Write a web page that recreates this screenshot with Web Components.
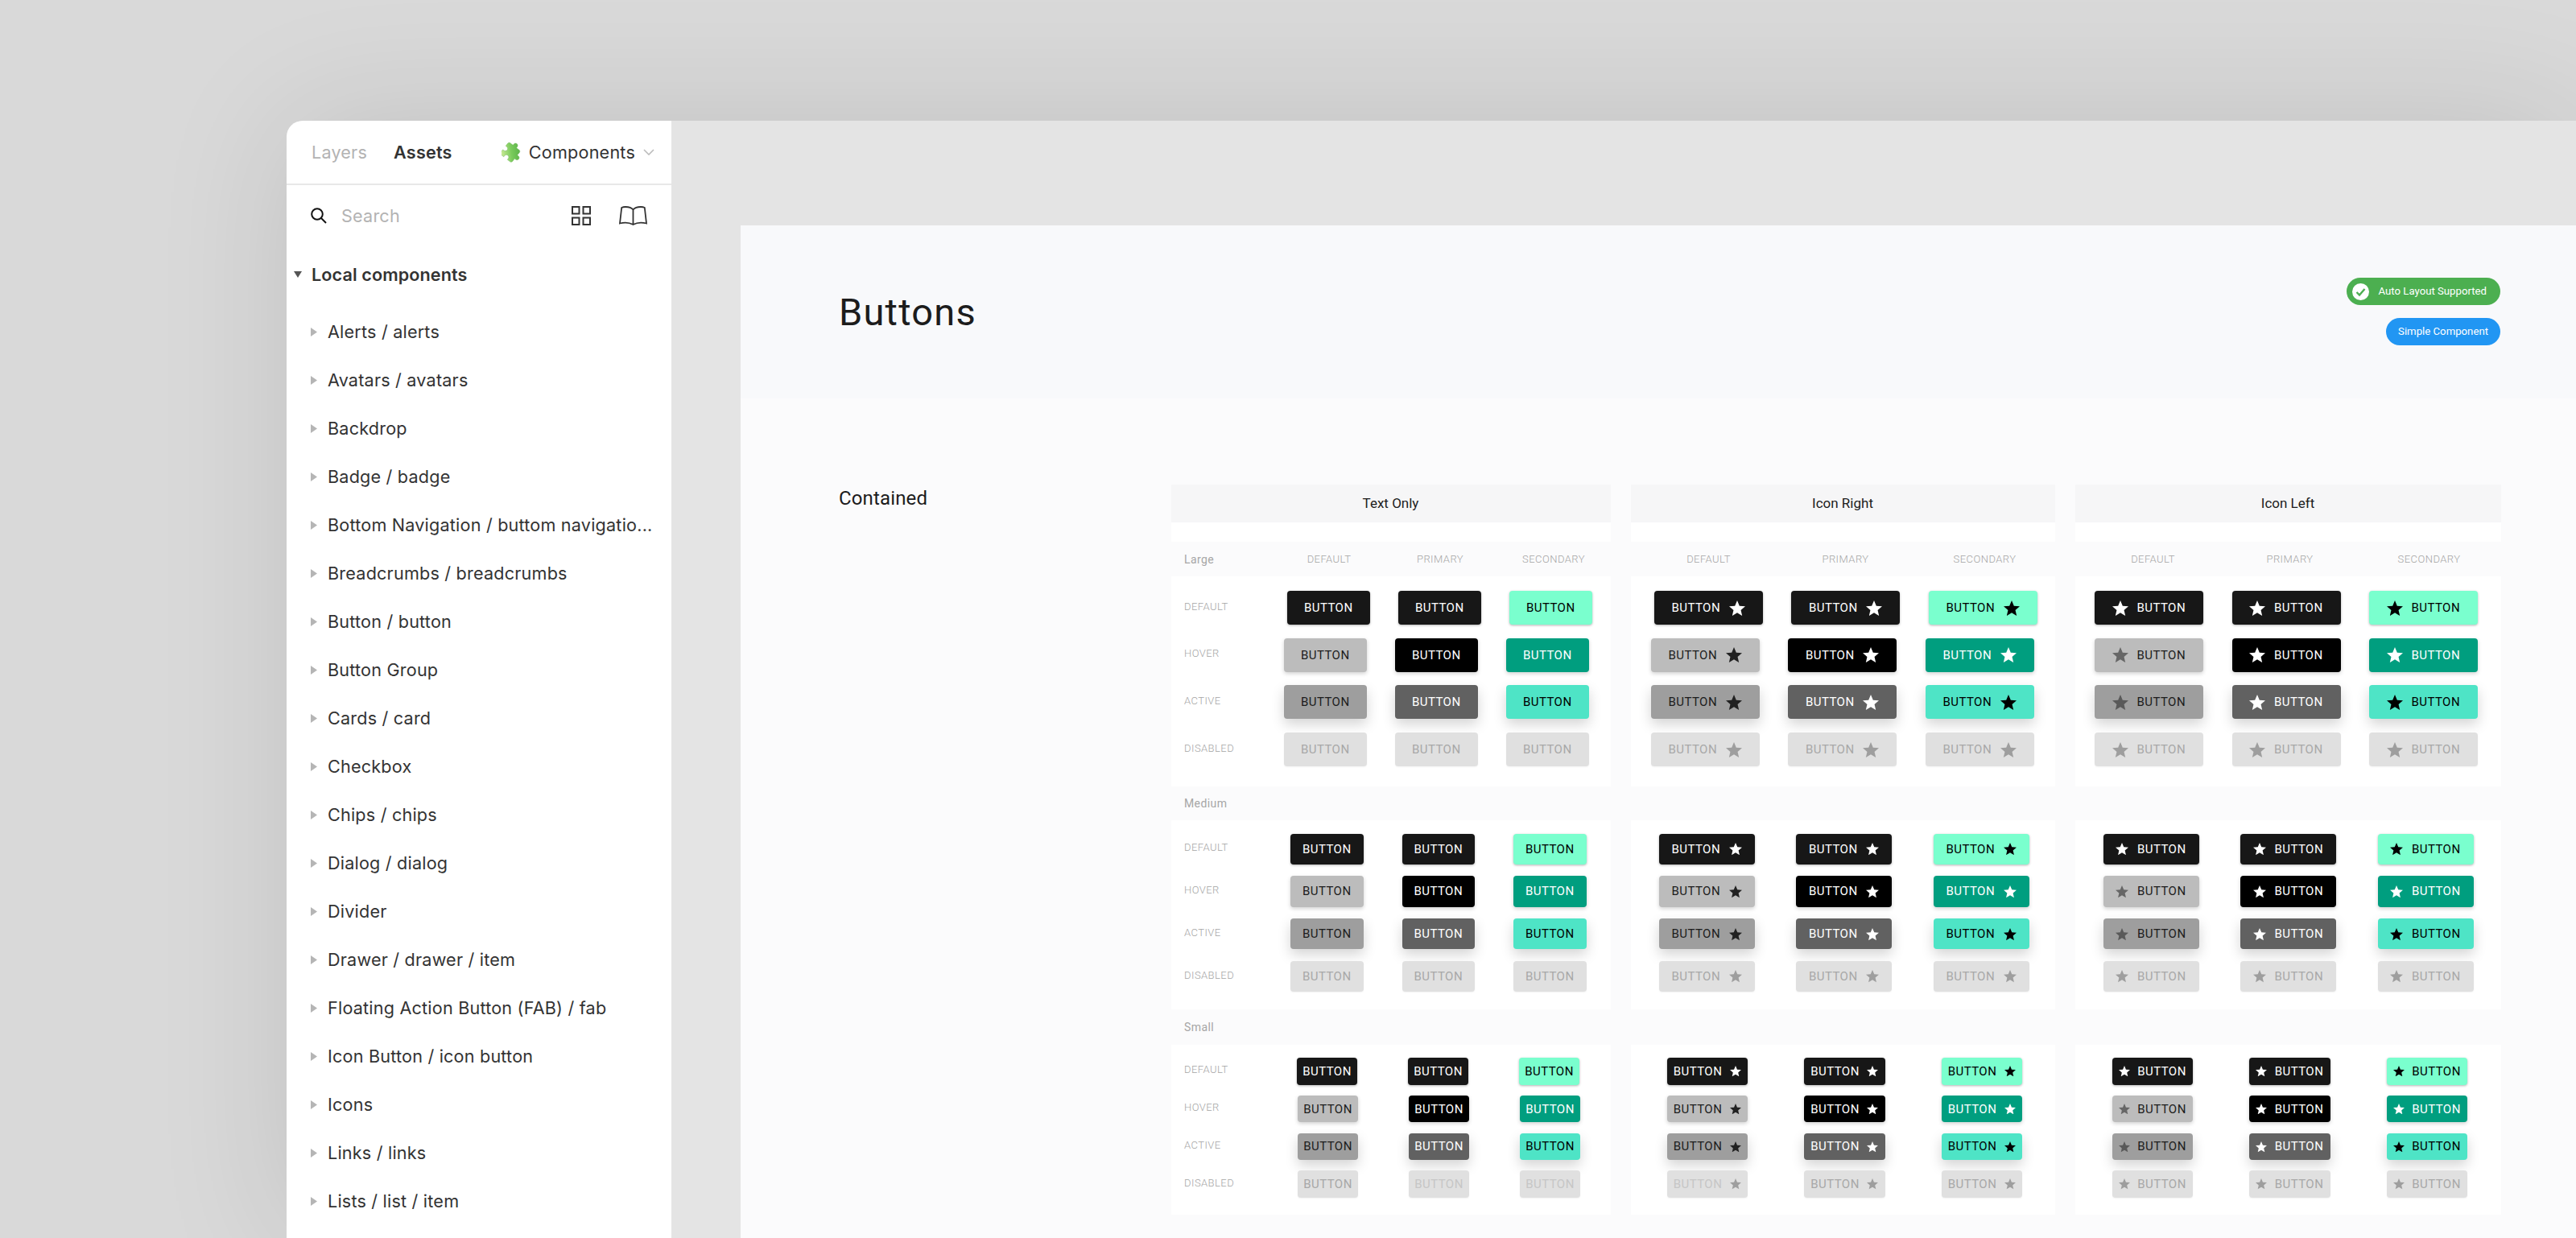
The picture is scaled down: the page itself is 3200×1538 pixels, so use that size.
<!DOCTYPE html>
<html>
<head>
<meta charset="utf-8">
<title>Buttons</title>
<style>
  html, body { margin: 0; height: 1538px; overflow: hidden; background: #d9d9d9; }
  body { font-family: "Inter", "Liberation Sans", sans-serif; }
</style>
</head>
<body>
<figma-window>
  <assets-panel slot="side"></assets-panel>
  <design-canvas slot="main">
    <buttons-board></buttons-board>
  </design-canvas>
</figma-window>

<script>
const STAR = 'M12 17.27L18.18 21l-1.64-7.03L22 9.24l-7.19-.61L12 2 9.19 8.63 2 9.24l5.46 4.73L5.82 21z';

const THEME = {
    default: {
        default: ['#171717', '#fff', '#fff'],
        hover: ['#bcbcbc', '#1c1c1c', '#212121'],
        active: ['#9e9e9e', '#1c1c1c', '#212121'],
        disabled: ['#e0e0e0', '#a8a8a8', '#9e9e9e']
    },
    primary: {
        default: ['#171717', '#fff', '#fff'],
        hover: ['#000', '#fff', '#fff'],
        active: ['#616161', '#fff', '#fff'],
        disabled: ['#e0e0e0', '#a8a8a8', '#9e9e9e']
    },
    secondary: {
        default: ['#7affce', '#000', '#000'],
        hover: ['#009e7f', '#fff', '#fff'],
        active: ['#4ee4c6', '#000', '#000'],
        disabled: ['#e0e0e0', '#a8a8a8', '#9e9e9e']
    }
};

const SHADOW = {
    default: '0 1px 3px rgba(0,0,0,.3)',
    hover: '0 2px 5px rgba(0,0,0,.18)',
    active: '0 7px 16px rgba(0,0,0,.17)',
    disabled: '0 1px 2px rgba(0,0,0,.05)'
};

class FigmaWindow extends HTMLElement {
    constructor() {
        super();
        this.shadowDOM = this.attachShadow({mode: 'open'});
    }
    connectedCallback() {
        this.shadowDOM.innerHTML = `
            <style>
            :host {
                display: flex;
                margin: 150px 0 0 356px;
                height: 1388px;
                border-top-left-radius: 20px;
                box-shadow: 0 0 170px rgba(0,0,0,.11);
                overflow: visible;
            }
            </style>
            <slot name="side"></slot>
            <slot name="main"></slot>
        `;
    }
}

class TreeRow extends HTMLElement {
    constructor() {
        super();
        this.shadowDOM = this.attachShadow({mode: 'open'});
    }
    connectedCallback() {
        this.shadowDOM.innerHTML = `
            <style>
            :host {
                display: flex;
                align-items: center;
                height: 60px;
                padding-left: 30px;
                font-size: 21.6px;
                letter-spacing: .2px;
                color: #333;
                white-space: nowrap;
            }
            svg { width: 8px; height: 11px; margin-right: 13px; flex: none; }
            </style>
            <svg viewBox="0 0 8 11"><path d="M0 0l8 5.5L0 11z" fill="#b5b5b5"/></svg>
            <slot></slot>
        `;
    }
}

class AssetsPanel extends HTMLElement {
    constructor() {
        super();
        this.shadowDOM = this.attachShadow({mode: 'open'});
    }
    connectedCallback() {
        const items = ['Alerts / alerts', 'Avatars / avatars', 'Backdrop', 'Badge / badge',
            'Bottom Navigation / buttom navigatio...', 'Breadcrumbs / breadcrumbs', 'Button / button',
            'Button Group', 'Cards / card', 'Checkbox', 'Chips / chips', 'Dialog / dialog', 'Divider',
            'Drawer / drawer / item', 'Floating Action Button (FAB) / fab', 'Icon Button / icon button',
            'Icons', 'Links / links', 'Lists / list / item'];
        this.shadowDOM.innerHTML = `
            <style>
            :host {
                display: block;
                width: 478px;
                height: 1388px;
                background: #fff;
                border-top-left-radius: 20px;
                overflow: hidden;
                font-family: "Inter", "Liberation Sans", sans-serif;
                color: #333;
            }
            .tabs {
                display: flex;
                align-items: center;
                height: 78px;
                padding: 0 21px 0 31px;
                border-bottom: 2px solid #e8e8e8;
                font-size: 21.6px;
                letter-spacing: .2px;
            }
            .layers { color: #b3b3b3; margin-right: 33px; }
            .assets { font-weight: 600; }
            .kit { display: flex; align-items: center; margin-left: auto; }
            .kit .puzzle { width: 26px; height: 26px; margin-right: 8px; }
            .kit .chev { width: 14px; height: 8px; margin-left: 10px; }
            .search {
                display: flex;
                align-items: center;
                height: 76px;
                padding: 0 30px 0 30px;
            }
            .search .text { font-size: 21.6px; letter-spacing: .2px; color: #b3b3b3; margin-left: 18px; }
            .search .grid { margin-left: auto; margin-right: 35px; }
            .local {
                display: flex;
                align-items: center;
                height: 70px;
                padding: 0 0 8px 9px;
                box-sizing: content-box;
                margin-bottom: -2px;
                font-size: 21.6px;
                font-weight: 600;
                letter-spacing: .1px;
            }
            .local svg { width: 10px; height: 8px; margin-right: 12px; }
            </style>
            <div class="tabs">
                <span class="layers">Layers</span>
                <span class="assets">Assets</span>
                <span class="kit">
                    <svg class="puzzle" viewBox="0 0 24 24">
                        <defs><linearGradient id="pz" x1="1" y1="0" x2="0" y2="1">
                            <stop offset="0" stop-color="#4aa63f"/>
                            <stop offset=".55" stop-color="#7acb5c"/>
                            <stop offset="1" stop-color="#d6ee9f"/>
                        </linearGradient></defs>
                        <path transform="rotate(38 12 12)" fill="url(#pz)" stroke="#6db356" stroke-width=".4" d="M20.5 11H19V7c0-1.1-.9-2-2-2h-4V3.5C13 2.12 11.88 1 10.5 1S8 2.12 8 3.5V5H4c-1.1 0-1.99.9-1.99 2v3.8H3.5c1.49 0 2.7 1.21 2.7 2.7s-1.21 2.7-2.7 2.7H2V20c0 1.1.9 2 2 2h3.8v-1.5c0-1.49 1.21-2.7 2.7-2.7 1.49 0 2.7 1.21 2.7 2.7V22H17c1.1 0 2-.9 2-2v-4h1.5c1.38 0 2.5-1.12 2.5-2.5S21.88 11 20.5 11z"/>
                    </svg>
                    <span>Components</span>
                    <svg class="chev" viewBox="0 0 14 8"><path d="M1 1l6 6 6-6" fill="none" stroke="#bbb" stroke-width="1.6"/></svg>
                </span>
            </div>
            <div class="search">
                <svg width="20" height="20" viewBox="0 0 20 20"><circle cx="8" cy="8" r="6.8" fill="none" stroke="#111" stroke-width="2"/><path d="M13 13l6 6" stroke="#111" stroke-width="2" fill="none"/></svg>
                <span class="text">Search</span>
                <svg class="grid" width="24" height="24" viewBox="0 0 24 24" fill="none" stroke="#333" stroke-width="2">
                    <rect x="1" y="1" width="8.5" height="8.5"/><rect x="14.5" y="1" width="8.5" height="8.5"/>
                    <rect x="1" y="14.5" width="8.5" height="8.5"/><rect x="14.5" y="14.5" width="8.5" height="8.5"/>
                </svg>
                <svg width="35" height="24" viewBox="0 0 35 24" fill="none" stroke="#333" stroke-width="1.8">
                    <path d="M17.5 4.5C15.5 2 12 1 8 1 6 1 4.5 1.3 3.2 2L1 21.5c5-1.3 11.5-1.3 16.5 1.5 5-2.8 11.5-2.8 16.5-1.5L31.8 2C30.500 1.300 29 1 27 1c-4 0-7.500 1-9.500 3.500zM17.500 4.500V23"/>
                </svg>
            </div>
            <div class="local">
                <svg viewBox="0 0 10 8"><path d="M0 0h10L5 8z" fill="#555"/></svg>
                <span>Local components</span>
            </div>
            <div class="list">${items.map(t => `<tree-row>${t}</tree-row>`).join('')}</div>
        `;
    }
}

class DesignCanvas extends HTMLElement {
    constructor() {
        super();
        this.shadowDOM = this.attachShadow({mode: 'open'});
    }
    connectedCallback() {
        this.shadowDOM.innerHTML = `
            <style>
            :host {
                display: block;
                flex: 1;
                min-width: 0;
                height: 1388px;
                box-sizing: border-box;
                padding: 130px 0 0 86px;
                background: #e4e4e4;
                overflow: hidden;
            }
            </style>
            <slot></slot>
        `;
    }
}

class DemoButton extends HTMLElement {
    constructor() {
        super();
        this.shadowDOM = this.attachShadow({mode: 'open'});
    }
    connectedCallback() {
        const kind = this.getAttribute('kind');
        const state = this.getAttribute('state');
        const icon = this.getAttribute('icon');
        let [bg, fg, star] = THEME[kind][state];
        if (this.hasAttribute('faint')) fg = '#c6c6c6';
        if (icon === 'left' && kind === 'default' && (state === 'hover' || state === 'active')) {
            star = state === 'hover' ? '#666' : '#595959';
        }
        const sz = this.getAttribute('star');
        const svg = icon === 'none' ? '' : `<svg width="${sz}" height="${sz * .95}" viewBox="2 2 20 19"><path fill="${star}" d="${STAR}"/></svg>`;
        this.shadowDOM.innerHTML = `
            <style>
            :host {
                display: inline-flex;
                flex: none;
                align-items: center;
                justify-content: center;
                gap: ${this.getAttribute('space')}px;
                width: ${this.getAttribute('w')}px;
                height: ${this.getAttribute('h')}px;
                border-radius: 4px;
                background: ${bg};
                color: ${fg};
                box-shadow: ${SHADOW[state]};
                font-family: "Roboto", "Liberation Sans", sans-serif;
                font-size: 15px;
                font-weight: 400;
                letter-spacing: .45px;
            }
            .t { display: block; white-space: nowrap; }
            svg { display: block; flex: none; }
            </style>
            ${icon === 'left' ? svg : ''}<span class="t"><slot></slot></span>${icon === 'right' ? svg : ''}
        `;
    }
}

class ButtonRow extends HTMLElement {
    constructor() {
        super();
        this.shadowDOM = this.attachShadow({mode: 'open'});
    }
    connectedCallback() {
        const lead = parseFloat(this.getAttribute('lead'));
        const label = this.getAttribute('label');
        this.shadowDOM.innerHTML = `
            <style>
            :host {
                display: flex;
                align-items: flex-start;
                padding-left: ${label ? 16.5 : lead}px;
                height: ${this.getAttribute('h')}px;
                font-family: "Roboto", "Liberation Sans", sans-serif;
            }
            .lab {
                flex: none;
                width: ${lead - 16.5}px;
                height: ${this.getAttribute('h')}px;
                display: flex;
                align-items: center;
                margin-top: -2px;
                font-size: 13px;
                font-weight: 300;
                letter-spacing: .45px;
                color: #a6a6a6;
            }
            .btns { display: flex; gap: ${this.getAttribute('gap')}px; }
            </style>
            ${label ? `<span class="lab">${label}</span>` : ''}
            <div class="btns"><slot></slot></div>
        `;
    }
}

class SizeBlock extends HTMLElement {
    constructor() {
        super();
        this.shadowDOM = this.attachShadow({mode: 'open'});
    }
    connectedCallback() {
        const cells = this.dataset.cells ? JSON.parse(this.dataset.cells) : null;
        const pad = parseFloat(this.dataset.pad || 0);
        const names = ['DEFAULT', 'PRIMARY', 'SECONDARY'];
        const title = this.getAttribute('name');
        this.shadowDOM.innerHTML = `
            <style>
            :host { display: block; font-family: "Roboto", "Liberation Sans", sans-serif; }
            .band {
                display: flex;
                align-items: center;
                height: ${this.dataset.band}px;
                padding-left: ${title ? 16.5 : pad}px;
            }
            .name { flex: none; width: ${pad - 16.5}px; font-size: 14px; font-weight: 400; letter-spacing: .4px; color: #a6a6a6; }
            .cell { flex: none; text-align: center; font-size: 13px; font-weight: 300; letter-spacing: .45px; color: #a6a6a6; }
            .card {
                display: flex;
                flex-direction: column;
                box-sizing: border-box;
                height: ${this.dataset.card}px;
                padding-top: ${this.dataset.top}px;
                gap: ${this.dataset.rowgap}px;
                background: #fff;
            }
            </style>
            <div class="band">
                ${title ? `<span class="name">${title}</span>` : ''}
                ${cells ? cells.map((w, i) => `<span class="cell" style="width:${w}px">${names[i]}</span>`).join('') : ''}
            </div>
            <div class="card"><slot></slot></div>
        `;
    }
}

class VariantColumn extends HTMLElement {
    constructor() {
        super();
        this.shadowDOM = this.attachShadow({mode: 'open'});
    }
    connectedCallback() {
        this.shadowDOM.innerHTML = `
            <style>
            :host {
                display: block;
                flex: none;
                width: ${this.getAttribute('w')}px;
                font-family: "Roboto", "Liberation Sans", sans-serif;
            }
            .head {
                height: 47px;
                display: flex;
                align-items: center;
                justify-content: center;
                padding-bottom: 1px;
                box-sizing: border-box;
                background: #f6f6f7;
                font-size: 17px;
                color: #1c1c1c;
            }
            .strip { height: 24px; background: #fff; }
            </style>
            <div class="head">${this.getAttribute('title')}</div>
            <div class="strip"></div>
            <slot></slot>
        `;
    }
}

class StatusPill extends HTMLElement {
    constructor() {
        super();
        this.shadowDOM = this.attachShadow({mode: 'open'});
    }
    connectedCallback() {
        const ok = this.hasAttribute('check');
        this.shadowDOM.innerHTML = `
            <style>
            :host {
                display: inline-flex;
                align-items: center;
                height: 34px;
                box-sizing: border-box;
                padding: 0 ${ok ? 17 : 15}px 0 ${ok ? 7 : 15}px;
                gap: 12px;
                border-radius: 17px;
                background: ${ok ? '#4caf50' : '#2196f3'};
                color: #fff;
                font-family: "Roboto", "Liberation Sans", sans-serif;
                font-size: 13.2px;
                white-space: nowrap;
            }
            svg { display: block; flex: none; }
            .t { display: block; margin-top: -2px; }
            </style>
            ${ok ? `<svg width="21" height="21" viewBox="0 0 21 21"><circle cx="10.5" cy="10.5" r="10.5" fill="#fff"/><path d="M5.500 11l3.500 3.500 6.500-7.500" fill="none" stroke="#4caf50" stroke-width="2.400"/></svg>` : ''}
            <span class="t"><slot></slot></span>
        `;
    }
}

// per column, per size: where the rows of buttons start and how they are spaced
const COLUMNS = [
    {
        title: 'Text Only', w: 546, icon: 'none', pad: 127.5, cells: [138, 138, 144], labels: true,
        large: {w: 102.5, lead: [144.5, 140.5, 140.5, 140.5], gap: 35.5},
        medium: {w: 90.5, lead: [148.5, 148.5, 148.5, 148.5], gap: 48},
        small: {w: 75, lead: [156.5, 157.5, 157.5, 157.5], gap: 63}
    },
    {
        title: 'Icon Right', w: 527, icon: 'right', pad: 12, cells: [170, 170, 176],
        large: {w: 135, lead: [29, 25, 25, 25], gap: 35.5},
        medium: {w: 119, lead: [35, 35, 35, 35], gap: 51.5},
        small: {w: 100.5, lead: [45, 45, 45, 45], gap: 70}
    },
    {
        title: 'Icon Left', w: 529, icon: 'left', pad: 12, cells: [170, 170, 176],
        large: {w: 135, lead: [24.5, 24.5, 24.5, 24.5], gap: 35.5},
        medium: {w: 119, lead: [35, 35, 35, 35], gap: 51.5},
        small: {w: 100.5, lead: [46, 46, 46, 46], gap: 70}
    }
];

const SIZES = {
    large: {name: 'Large', h: 42, band: 43, card: 261, top: 18, rowgap: 16.7, star: 20, space: 10.5},
    medium: {name: 'Medium', h: 38.400, band: 42, card: 235, top: 16.5, rowgap: 14.400, star: 16, space: 10.5},
    small: {name: 'Small', h: 33.600, band: 44, card: 211, top: 16, rowgap: 13.200, star: 14, space: 9.5}
};

const STATES = ['default', 'hover', 'active', 'disabled'];
const KINDS = ['default', 'primary', 'secondary'];

class ButtonsBoard extends HTMLElement {
    constructor() {
        super();
        this.shadowDOM = this.attachShadow({mode: 'open'});
    }
    connectedCallback() {
        this.shadowDOM.innerHTML = `
            <style>
            :host {
                display: block;
                width: 2280px;
                height: 1258px;
                background: #fbfbfc;
                font-family: "Roboto", "Liberation Sans", sans-serif;
                color: #1c1c1c;
            }
            header {
                display: flex;
                justify-content: space-between;
                align-items: center;
                height: 215px;
                padding: 0 94px 0 122px;
                box-sizing: border-box;
                background: #f8f9fb;
            }
            h1 { margin: 0; font-size: 47px; font-weight: 400; letter-spacing: 1.2px; }
            .pills {
                align-self: flex-start;
                margin-top: 65px;
                display: flex;
                flex-direction: column;
                align-items: flex-end;
                gap: 16px;
            }
            .section {
                display: flex;
                padding: 107px 0 0 122px;
            }
            .section-name { flex: none; width: 412.500px; margin-top: 3px; font-size: 24px; line-height: 28px; letter-spacing: .15px; }
            .cols { display: flex; gap: 25px; }
            </style>
            <header>
                <h1>Buttons</h1>
                <div class="pills">
                    <status-pill check>Auto Layout Supported</status-pill>
                    <status-pill>Simple Component</status-pill>
                </div>
            </header>
            <div class="section">
                <div class="section-name">Contained</div>
                <div class="cols"></div>
            </div>
        `;
        const cols = this.shadowDOM.querySelector('.cols');
        COLUMNS.forEach(cfg => cols.appendChild(this.buildColumn(cfg)));
    }

    buildColumn(cfg) {
        const col = document.createElement('variant-column');
        col.setAttribute('title', cfg.title);
        col.setAttribute('w', cfg.w);
        Object.keys(SIZES).forEach(key => {
            const size = SIZES[key];
            const block = document.createElement('size-block');
            if (cfg.labels) block.setAttribute('name', size.name);
            block.dataset.band = size.band;
            block.dataset.card = size.card;
            block.dataset.top = size.top;
            block.dataset.rowgap = size.rowgap;
            block.dataset.pad = cfg.pad;
            if (key === 'large') block.dataset.cells = JSON.stringify(cfg.cells);
            STATES.forEach((state, i) => {
                const row = document.createElement('button-row');
                row.setAttribute('lead', cfg[key].lead[i]);
                row.setAttribute('gap', cfg[key].gap);
                row.setAttribute('h', size.h);
                if (cfg.labels) row.setAttribute('label', state.toUpperCase());
                KINDS.forEach(kind => {
                    const btn = document.createElement('demo-button');
                    btn.setAttribute('kind', kind);
                    btn.setAttribute('state', state);
                    btn.setAttribute('icon', cfg.icon);
                    btn.setAttribute('w', cfg[key].w);
                    btn.setAttribute('h', size.h);
                    btn.setAttribute('star', size.star);
                    btn.setAttribute('space', size.space);
                    if (state === 'disabled' && key === 'small') {
                        if (cfg.icon === 'none' && kind !== 'default') btn.setAttribute('faint', '');
                        if (cfg.icon === 'right' && kind === 'default') btn.setAttribute('faint', '');
                    }
                    btn.textContent = 'BUTTON';
                    row.appendChild(btn);
                });
                block.appendChild(row);
            });
            col.appendChild(block);
        });
        return col;
    }
}

customElements.define('figma-window', FigmaWindow);
customElements.define('tree-row', TreeRow);
customElements.define('assets-panel', AssetsPanel);
customElements.define('design-canvas', DesignCanvas);
customElements.define('demo-button', DemoButton);
customElements.define('button-row', ButtonRow);
customElements.define('size-block', SizeBlock);
customElements.define('variant-column', VariantColumn);
customElements.define('status-pill', StatusPill);
customElements.define('buttons-board', ButtonsBoard);
</script>
</body>
</html>
